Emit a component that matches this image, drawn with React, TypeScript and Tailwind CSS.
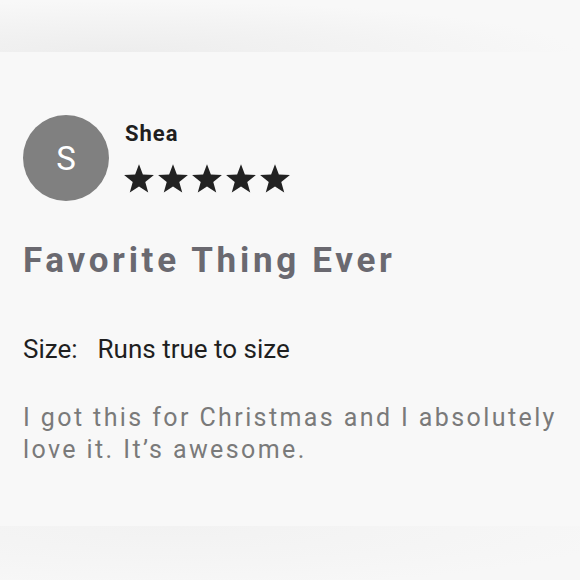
import React from "react";

const starPoints = (() => {
  const pts: string[] = [];
  const cx = 15;
  const r = 15.7;
  const cy = r + 0.2;
  const ri = r * 0.42;
  for (let i = 0; i < 10; i++) {
    const a = (Math.PI / 5) * i - Math.PI / 2;
    const rr = i % 2 === 0 ? r : ri;
    pts.push(`${(cx + rr * Math.cos(a)).toFixed(2)},${(cy + rr * Math.sin(a)).toFixed(2)}`);
  }
  return pts.join(" ");
})();

const Star = () => (
  <svg width="30" height="29" viewBox="0 0 30 29" className="block">
    <polygon fill="#222222" points={starPoints} />
  </svg>
);

export default function App() {
  return (
    <div
      className="w-[580px] h-[580px] bg-[#f8f8f8] flex flex-col overflow-hidden"
      style={{ fontFamily: "Roboto, 'Liberation Sans', sans-serif" }}
    >
      <div className="h-[52px] bg-[radial-gradient(ellipse_at_20%_100%,#ededed_0%,#f3f3f3_40%,#f8f8f8_70%)]" />
      <div className="flex-1 px-[23px] pt-[63px]">
        <div className="flex gap-[16px]">
          <div className="w-[86px] h-[86px] rounded-full bg-[#808080] flex items-center justify-center text-white text-[33px] leading-none">
            S
          </div>
          <div className="flex flex-col pt-[4px]">
            <div className="text-[22px] font-bold text-[#1f1f1f] leading-[30px] tracking-[1px]">Shea</div>
            <div className="flex gap-[4px] mt-[15px] -ml-[1px]">
              <Star />
              <Star />
              <Star />
              <Star />
              <Star />
            </div>
          </div>
        </div>
        <div className="mt-[36px] text-[35px] font-bold text-[#6a6970] tracking-[3.7px] leading-[48px]">
          Favorite Thing Ever
        </div>
        <div className="mt-[46px] text-[26px] text-[#1f1f1f] leading-[36px] flex">
          <span>Size:</span>
          <span className="ml-[20px]">Runs true to size</span>
        </div>
        <div className="mt-[35px] text-[25px] text-[#7a7a7a] tracking-[2.4px] leading-[32px]">
          I got this for Christmas and I absolutely love it. It’s awesome.
        </div>
      </div>
      <div className="h-[54px] bg-[radial-gradient(ellipse_at_30%_0%,#f2f2f2_0%,#f5f5f5_50%,#f7f7f7_80%)]" />
    </div>
  );
}
